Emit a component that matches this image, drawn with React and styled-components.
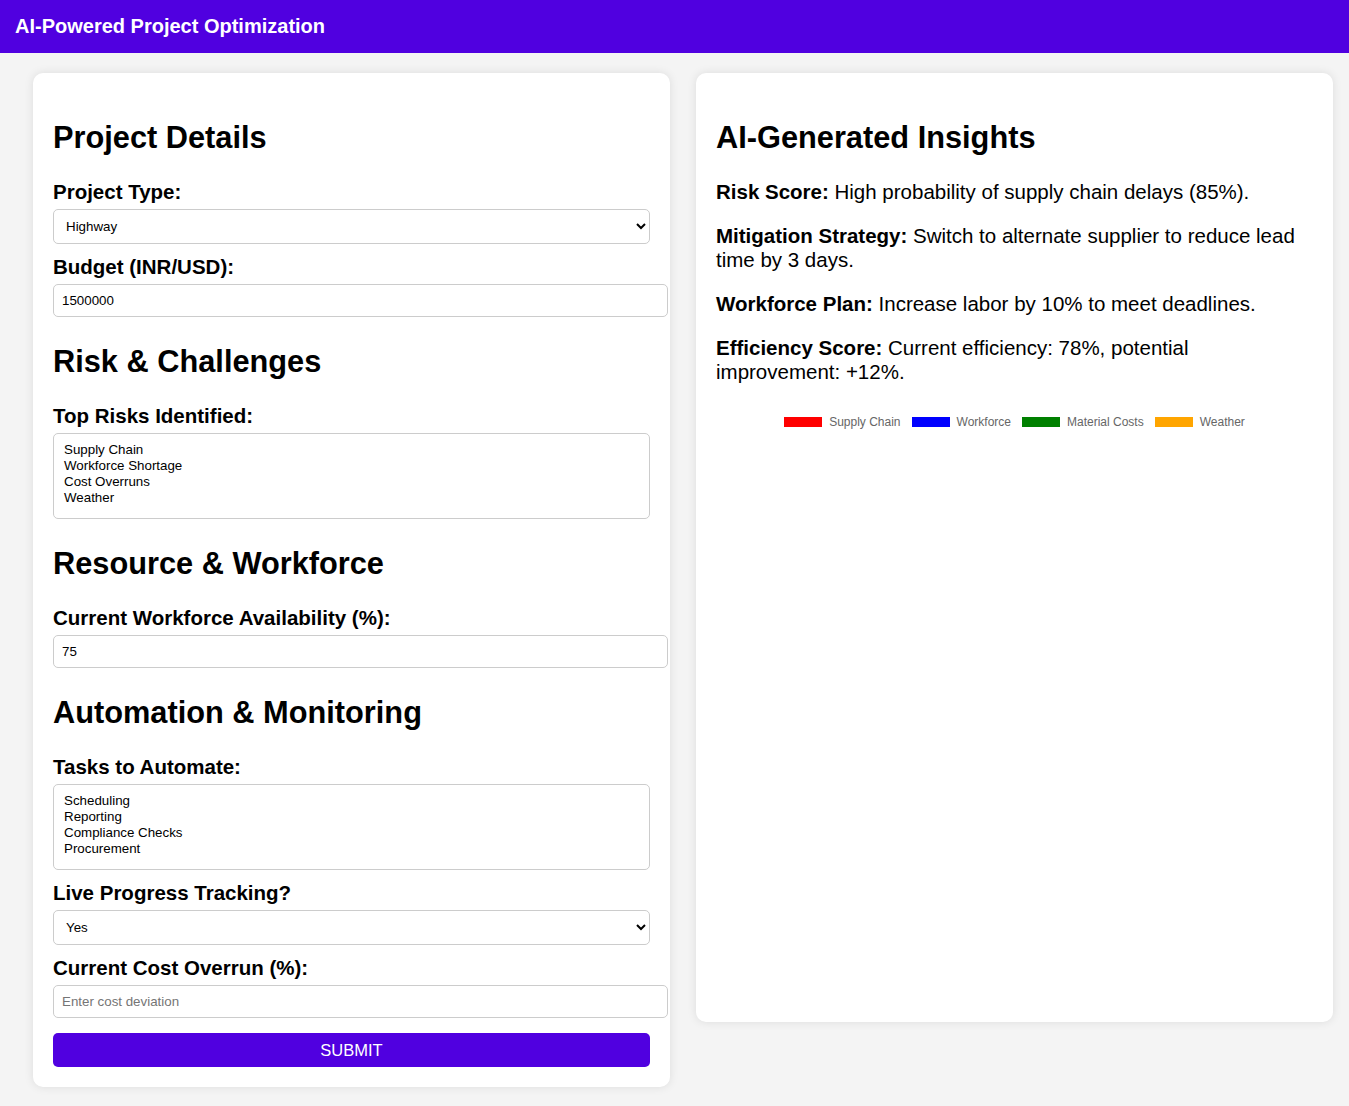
import React from "react";
import styled, { createGlobalStyle } from "styled-components";

const GlobalStyle = createGlobalStyle`
  body {
    margin: 0;
    background: #f4f4f4;
    font-family: Arial, "Liberation Sans", sans-serif;
  }
`;

const legend = [
  { label: "Supply Chain", color: "#ff0000" },
  { label: "Workforce", color: "#0000ff" },
  { label: "Material Costs", color: "#008000" },
  { label: "Weather", color: "#ffa500" },
];

const insights = [
  { title: "Risk Score:", text: "High probability of supply chain delays (85%)." },
  {
    title: "Mitigation Strategy:",
    text: "Switch to alternate supplier to reduce lead time by 3 days.",
  },
  { title: "Workforce Plan:", text: "Increase labor by 10% to meet deadlines." },
  {
    title: "Efficiency Score:",
    text: "Current efficiency: 78%, potential improvement: +12%.",
  },
];

const App = () => {
  return (
    <>
      <GlobalStyle />
      <Header>AI-Powered Project Optimization</Header>
      <Main>
        <Card>
          <SectionTitle>Project Details</SectionTitle>
          <Label>Project Type:</Label>
          <Select defaultValue="highway">
            <option value="highway">Highway</option>
            <option value="bridge">Bridge</option>
            <option value="building">Building</option>
          </Select>
          <Label>Budget (INR/USD):</Label>
          <Input type="number" defaultValue="1500000" />

          <SectionTitle>Risk &amp; Challenges</SectionTitle>
          <Label>Top Risks Identified:</Label>
          <MultiSelect multiple defaultValue={[]}>
            <option>Supply Chain</option>
            <option>Workforce Shortage</option>
            <option>Cost Overruns</option>
            <option>Weather</option>
          </MultiSelect>

          <SectionTitle>Resource &amp; Workforce</SectionTitle>
          <Label>Current Workforce Availability (%):</Label>
          <Input type="number" defaultValue="75" />

          <SectionTitle>Automation &amp; Monitoring</SectionTitle>
          <Label>Tasks to Automate:</Label>
          <MultiSelect multiple defaultValue={[]}>
            <option>Scheduling</option>
            <option>Reporting</option>
            <option>Compliance Checks</option>
            <option>Procurement</option>
          </MultiSelect>
          <Label>Live Progress Tracking?</Label>
          <Select defaultValue="yes">
            <option value="yes">Yes</option>
            <option value="no">No</option>
          </Select>
          <Label>Current Cost Overrun (%):</Label>
          <Input type="number" placeholder="Enter cost deviation" />
          <SubmitButton>SUBMIT</SubmitButton>
        </Card>

        <Card>
          <SectionTitle>AI-Generated Insights</SectionTitle>
          {insights.map((item) => (
            <Insight key={item.title}>
              <strong>{item.title}</strong> {item.text}
            </Insight>
          ))}
          <ChartArea>
            <Legend>
              {legend.map((l) => (
                <LegendItem key={l.label}>
                  <LegendBox color={l.color} />
                  {l.label}
                </LegendItem>
              ))}
            </Legend>
          </ChartArea>
        </Card>
      </Main>
    </>
  );
};

const Header = styled.header`
  background: #5000e0;
  color: #fff;
  height: 53px;
  display: flex;
  align-items: center;
  padding: 0 15px;
  font-size: 20px;
  font-weight: bold;
`;

const Main = styled.main`
  display: grid;
  grid-template-columns: 637px 637px;
  gap: 26px;
  align-items: start;
  padding: 20px 16px 20px 33px;
`;

const Card = styled.section`
  background: #fff;
  border-radius: 10px;
  box-shadow: 0 0 10px rgba(0, 0, 0, 0.1);
  padding: 20px;
`;

const SectionTitle = styled.h2`
  font-size: 30.75px;
  font-weight: bold;
  margin: 28px 0 25px;
  line-height: 34px;
`;

const Label = styled.label`
  display: block;
  font-size: 20.5px;
  font-weight: bold;
  line-height: 23px;
  margin-bottom: 6px;
`;

const fieldBase = `
  font-family: Arial, "Liberation Sans", sans-serif;
  font-size: 13.333px;
  border: 1px solid #ccc;
  border-radius: 5px;
  padding: 8px;
  margin-bottom: 11px;
  background: #fff;
  color: #000;
  box-sizing: content-box;
`;

const Select = styled.select`
  ${fieldBase}
  display: block;
  box-sizing: border-box;
  width: 100%;
  height: 35px;
`;

const MultiSelect = styled.select`
  ${fieldBase}
  display: block;
  box-sizing: border-box;
  width: 100%;
  height: 86px;
  padding: 8px 10px 6px;
  overflow: hidden;

  option {
    padding: 0;
    line-height: 17px;
  }
`;

const Input = styled.input`
  ${fieldBase}
  display: block;
  width: 100%;
  height: 15px;

  &::placeholder {
    color: #757575;
  }
  &::-webkit-inner-spin-button {
    display: none;
  }
`;

const SubmitButton = styled.button`
  display: block;
  width: 100%;
  height: 34px;
  margin-top: 15px;
  background: #5000e0;
  color: #fff;
  border: none;
  border-radius: 5px;
  font-family: Arial, "Liberation Sans", sans-serif;
  font-size: 16.5px;
  cursor: pointer;
`;

const Insight = styled.p`
  font-size: 20.5px;
  line-height: 24px;
  margin: 20px 0;
`;

const ChartArea = styled.div`
  height: 598px;
`;

const Legend = styled.div`
  display: flex;
  justify-content: center;
  gap: 11px;
  padding-top: 11px;
`;

const LegendItem = styled.div`
  display: flex;
  align-items: center;
  gap: 7px;
  font-size: 12px;
  color: #666;
`;

const LegendBox = styled.span`
  display: inline-block;
  width: 38px;
  height: 10px;
  background: ${(p) => p.color};
`;

export default App;
